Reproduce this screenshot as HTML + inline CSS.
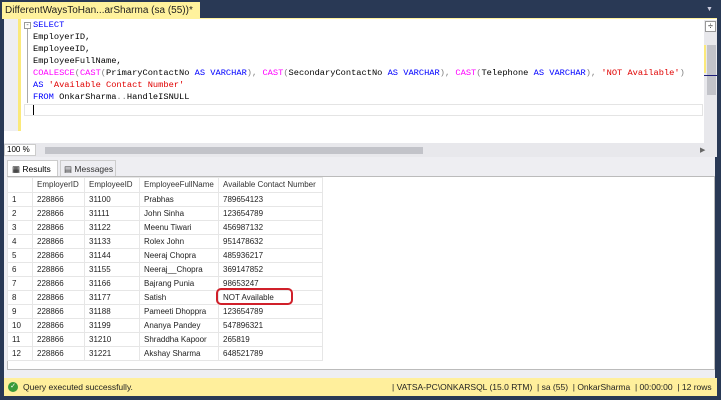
<!DOCTYPE html>
<html><head><meta charset="utf-8"><style>
*{margin:0;padding:0;box-sizing:border-box}
body{width:721px;height:400px;background:#293955;position:relative;overflow:hidden;font-family:"Liberation Sans",sans-serif}
.abs{position:absolute}
.tab{left:2px;top:2px;width:198px;height:17px;background:#fff29d;font-size:10px;line-height:17px;padding-left:3px;color:#1e1e1e;white-space:nowrap;overflow:hidden}
.editor{left:4px;top:18px;width:713px;height:126px;background:#fff;border-top:1px solid #fff29d}
.margin{left:4px;top:19px;width:14px;height:112px;background:#eeeef2}
.ybar{left:18px;top:19px;width:3px;height:112px;background:#fbe97a}
.code{left:33px;top:19px;font-family:"Liberation Mono",monospace;font-size:8.7px;line-height:12px;white-space:pre;color:#000}
.k{color:#0000ff}.f{color:#ff00ff}.s{color:#e00000}.g{color:#808080}
.vs{left:704px;top:20px;width:13px;height:124px;background:#e8e8ec}
.zoom{left:4px;top:143px;width:713px;height:14px;background:#e8e8ec}
.rpanel{left:4px;top:157px;width:711px;height:221px;background:#eeeef2}
table{position:absolute;left:7px;top:177px;border-collapse:collapse;table-layout:fixed;width:315px;font-size:8px;color:#1e1e1e;background:#fff}
td{height:13px;line-height:13px;border:1px solid #e6e6e6;padding:0 0 0 4px;white-space:nowrap;overflow:hidden}
tr.h td{height:14px;line-height:14px;color:#333}
.status{left:4px;top:378px;width:713px;height:18px;background:#ffef9c;font-size:8.5px;line-height:18px;color:#1e1e1e;white-space:nowrap}
</style></head><body>
<div class="abs tab">DifferentWaysToHan...arSharma (sa (55))* <span style="color:#555;margin-left:4px">⊣</span> <span style="margin-left:4px">✕</span></div>
<div class="abs" style="left:706px;top:6px;color:#ccd;font-size:7px">▼</div>
<div class="abs editor"></div>
<div class="abs margin"></div>
<div class="abs ybar"></div>
<div class="abs" style="left:24px;top:22px;width:7px;height:7px;border:1px solid #999;font-size:7px;line-height:5px;text-align:center;color:#555">-</div>
<div class="abs" style="left:27px;top:29px;width:1px;height:74px;background:#aaa"></div>
<div class="abs code"><span class="k">SELECT</span>
EmployerID,
EmployeeID,
EmployeeFullName,
<span class="f">COALESCE</span><span class="g">(</span><span class="f">CAST</span><span class="g">(</span>PrimaryContactNo <span class="k">AS VARCHAR</span><span class="g">),</span> <span class="f">CAST</span><span class="g">(</span>SecondaryContactNo <span class="k">AS VARCHAR</span><span class="g">),</span> <span class="f">CAST</span><span class="g">(</span>Telephone <span class="k">AS VARCHAR</span><span class="g">),</span> <span class="s">'NOT Available'</span><span class="g">)</span>
<span class="k">AS</span> <span class="s">'Available Contact Number'</span>
<span class="k">FROM</span> OnkarSharma<span class="g">..</span>HandleISNULL
</div>
<div class="abs" style="left:24px;top:104px;width:679px;height:12px;border:1px solid #e4e4e4"></div>
<div class="abs" style="left:33px;top:105px;width:1px;height:10px;background:#000"></div>
<div class="abs vs"></div>
<div class="abs" style="left:705px;top:21px;width:11px;height:11px;border:1px solid #999;background:#fff;font-size:9px;line-height:9px;text-align:center">÷</div>
<div class="abs" style="left:707px;top:45px;width:9px;height:50px;background:#c2c3c9"></div>
<div class="abs" style="left:704px;top:45px;width:2px;height:28px;background:#fbe97a"></div>
<div class="abs" style="left:704px;top:75px;width:13px;height:1px;background:#1c1c7a"></div>
<div class="abs zoom"></div>
<div class="abs" style="left:4px;top:144px;width:32px;height:12px;background:#fff;border:1px solid #ccc;font-size:8px;line-height:10px;padding-left:2px">100 % <span style="font-size:6px;margin-left:3px">▼</span></div>
<div class="abs" style="left:45px;top:147px;width:378px;height:7px;background:#c2c3c9"></div>
<div class="abs" style="left:700px;top:146px;font-size:7px;color:#666">▶</div>
<div class="abs rpanel"></div>
<div class="abs" style="left:7px;top:160px;width:51px;height:17px;background:#fff;font-size:8.5px;line-height:16px;padding-left:4px;border:1px solid #ccc;border-bottom:none">▦ Results</div>
<div class="abs" style="left:60px;top:160px;width:56px;height:16px;font-size:8.5px;line-height:16px;padding-left:3px;border:1px solid #ccc;border-bottom:none;color:#333">▤ Messages</div>
<div class="abs" style="left:7px;top:176px;width:708px;height:194px;background:#fff;border:1px solid #bbb"></div>
<table>
<colgroup><col style="width:25px"><col style="width:52px"><col style="width:55px"><col style="width:79px"><col style="width:104px"></colgroup>
<tr class="h"><td></td><td>EmployerID</td><td>EmployeeID</td><td>EmployeeFullName</td><td>Available Contact Number</td></tr>
<tr><td>1</td><td style="border:1px dashed #666">228866</td><td>31100</td><td>Prabhas</td><td>789654123</td></tr>
<tr><td>2</td><td>228866</td><td>31111</td><td>John Sinha</td><td>123654789</td></tr>
<tr><td>3</td><td>228866</td><td>31122</td><td>Meenu Tiwari</td><td>456987132</td></tr>
<tr><td>4</td><td>228866</td><td>31133</td><td>Rolex John</td><td>951478632</td></tr>
<tr><td>5</td><td>228866</td><td>31144</td><td>Neeraj Chopra</td><td>485936217</td></tr>
<tr><td>6</td><td>228866</td><td>31155</td><td>Neeraj__Chopra</td><td>369147852</td></tr>
<tr><td>7</td><td>228866</td><td>31166</td><td>Bajrang Punia</td><td>98653247</td></tr>
<tr><td>8</td><td>228866</td><td>31177</td><td>Satish</td><td>NOT Available</td></tr>
<tr><td>9</td><td>228866</td><td>31188</td><td>Pameeti Dhoppra</td><td>123654789</td></tr>
<tr><td>10</td><td>228866</td><td>31199</td><td>Ananya Pandey</td><td>547896321</td></tr>
<tr><td>11</td><td>228866</td><td>31210</td><td>Shraddha Kapoor</td><td>265819</td></tr>
<tr><td>12</td><td>228866</td><td>31221</td><td>Akshay Sharma</td><td>648521789</td></tr>
</table>
<div class="abs" style="left:216px;top:288px;width:77px;height:17px;border:2px solid #d0202a;border-radius:5px"></div>
<div class="abs status">
<span style="position:absolute;left:4px;top:4px;width:10px;height:10px;border-radius:50%;background:#3a9a3a;color:#fff;font-size:7px;line-height:10px;text-align:center">✓</span>
<span style="position:absolute;left:19px">Query executed successfully.</span>
<span style="position:absolute;left:388px;color:#222">| VATSA-PC\ONKARSQL (15.0 RTM) &nbsp;| sa (55) &nbsp;| OnkarSharma &nbsp;| 00:00:00 &nbsp;| 12 rows</span>
</div>
</body></html>
